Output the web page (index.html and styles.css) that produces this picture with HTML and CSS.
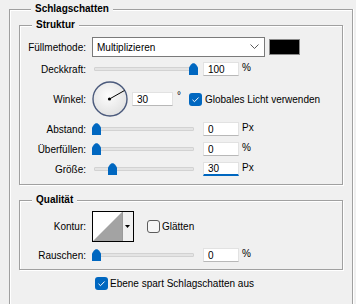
FILE: index.html
```html
<!DOCTYPE html>
<html lang="de">
<head>
<meta charset="UTF-8" />
<title>Schlagschatten</title>
<link rel="stylesheet" href="styles.css">
</head>
<body>
<div class="panel">
  <div class="group-title">Schlagschatten</div>

  <div class="group struktur">
    <div class="group-title">Struktur</div>

    <div class="row first">
      <span class="label">Füllmethode:</span>
      <div class="select">
        <span>Multiplizieren</span>
        <svg width="9" height="6" viewBox="0 0 9 6"><path d="M0.5 0.5L4.5 4.5L8.5 0.5" fill="none" stroke="#5a5a5a" stroke-width="1"/></svg>
      </div>
      <span class="swatch"></span>
    </div>

    <div class="row gap">
      <span class="label">Deckkraft:</span>
      <div class="slider"><span class="track"></span><span class="thumb" style="left:97px"></span></div>
      <input class="num" type="text" value="100">
      <span class="unit">%</span>
    </div>

    <div class="row gap dial-row">
      <span class="label">Winkel:</span>
      <svg class="dial" width="36" height="36" viewBox="0 0 36 36">
        <defs>
          <radialGradient id="dialFill" cx="45%" cy="40%" r="60%">
            <stop offset="0" stop-color="#fdfdfd"/>
            <stop offset="1" stop-color="#e2e2e2"/>
          </radialGradient>
        </defs>
        <circle cx="18" cy="18" r="17" fill="url(#dialFill)" stroke="#4b5a7c" stroke-width="1.4"/>
        <line x1="17.5" y1="18" x2="32.5" y2="9.5" stroke="#000" stroke-width="1"/>
        <circle cx="17.5" cy="18" r="1.6" fill="#000"/>
      </svg>
      <input class="num angle" type="text" value="30">
      <span class="degree">°</span>
      <span class="check on"><svg width="13" height="13" viewBox="0 0 13 13"><path d="M3.5 6.8L5.5 8.7L9.6 4.5" fill="none" stroke="#fff" stroke-width="1"/></svg></span>
      <span class="check-label">Globales Licht verwenden</span>
    </div>

    <div class="row gap">
      <span class="label">Abstand:</span>
      <div class="slider"><span class="track"></span><span class="thumb" style="left:0"></span></div>
      <input class="num" type="text" value="0">
      <span class="unit">Px</span>
    </div>

    <div class="row">
      <span class="label">Überfüllen:</span>
      <div class="slider"><span class="track"></span><span class="thumb" style="left:0"></span></div>
      <input class="num" type="text" value="0">
      <span class="unit">%</span>
    </div>

    <div class="row">
      <span class="label">Größe:</span>
      <div class="slider"><span class="track"></span><span class="thumb" style="left:16px"></span></div>
      <input class="num focus" type="text" value="30">
      <span class="unit">Px</span>
    </div>
  </div>

  <div class="group qualitaet">
    <div class="group-title">Qualität</div>

    <div class="row kontur-row">
      <span class="label">Kontur:</span>
      <svg class="kontur" width="42" height="31" viewBox="0 0 42 31">
        <rect x="0.5" y="0.5" width="41" height="30" fill="#f0f0f0" stroke="#000"/>
        <rect x="1" y="1" width="29" height="29" fill="#fff"/>
        <polygon points="1,30 30,1 30,30" fill="#a3a3a3"/>
        <line x1="30.5" y1="1" x2="30.5" y2="30" stroke="#9a9a9a"/>
        <polygon points="33,14 38,14 35.5,17" fill="#000"/>
      </svg>
      <span class="check off"></span>
      <span class="check-label">Glätten</span>
    </div>

    <div class="row rauschen">
      <span class="label">Rauschen:</span>
      <div class="slider"><span class="track"></span><span class="thumb" style="left:0"></span></div>
      <input class="num" type="text" value="0">
      <span class="unit">%</span>
    </div>
  </div>

  <div class="row footer">
    <span class="check on"><svg width="13" height="13" viewBox="0 0 13 13"><path d="M3.5 6.8L5.5 8.7L9.6 4.5" fill="none" stroke="#fff" stroke-width="1"/></svg></span>
    <span class="check-label">Ebene spart Schlagschatten aus</span>
  </div>
</div>
</body>
</html>
```

FILE: styles.css
```css
* {
  box-sizing: border-box;
}
body {
  margin: 0;
  background: #f0f0f0;
  color: #000;
  font-family: "Liberation Sans", Arial, sans-serif;
  font-size: 10px;
  overflow: hidden;
}
/* outer box runs off the bottom edge, so no bottom border */
.panel {
  margin: 9px 0 0 9px;
  width: 344px;
  height: calc(100vh - 9px);
  padding: 0 9px;
  border: 1px solid #a0a0a0;
  border-bottom: none;
  box-shadow: inset 1px 1px 0 #fff, 1px 0 0 #fff;
}
.group-title {
  width: max-content;
  margin: -7px 0 0 12px;
  padding: 0 4px;
  line-height: 12px;
  font-weight: bold;
  background: #f0f0f0;
}
.group {
  border: 1px solid #a0a0a0;
  box-shadow: inset 1px 1px 0 #fff, 1px 1px 0 #fff;
}
.struktur {
  margin-top: 10px;
  padding-bottom: 5px;
}
.qualitaet {
  margin-top: 15px;
  padding-bottom: 4px;
}
.row {
  display: flex;
  align-items: center;
  height: 20px;
}
.row.first {
  margin-top: 6px;
}
.row.gap {
  margin-top: 2px;
}
.dial-row {
  height: 36px;
}
.label {
  width: 66px;
  margin-right: 6px;
  text-align: right;
  white-space: nowrap;
}
.select {
  display: flex;
  align-items: center;
  justify-content: space-between;
  width: 173px;
  height: 20px;
  padding: 0 5px 0 4px;
  background: #fff;
  border: 1px solid #7a7a7a;
}
.select svg {
  display: block;
}
.swatch {
  width: 31px;
  height: 16px;
  margin-left: 4px;
  background: #000;
  border: 1px solid #8a8a8a;
}
.slider {
  position: relative;
  width: 106px;
  height: 14px;
}
.track {
  position: absolute;
  left: 2px;
  right: 4px;
  top: 5px;
  height: 4px;
  background: #e4e4e4;
  border: 1px solid #d2d2d2;
  border-radius: 1px;
}
.thumb {
  position: absolute;
  top: 1px;
  width: 9px;
  height: 12px;
  background: #0067c0;
  clip-path: polygon(0 100%, 0 38%, 20% 14%, 40% 2%, 60% 2%, 80% 14%, 100% 38%, 100% 100%);
}
.num {
  width: 36px;
  height: 14px;
  margin: 0 0 0 5px;
  padding: 0 0 0 4px;
  font: inherit;
  font-size: 10px;
  line-height: 12px;
  color: #000;
  background: #fff;
  border: 1px solid #e2e2e2;
  border-bottom-color: #b8b8b8;
  outline: none;
}
.num.focus {
  border-bottom: 2px solid #0067c0;
}
.unit {
  margin: 0 0 3px 3px;
}
.dial {
  display: block;
}
.num.angle {
  width: 41px;
  margin-left: 4px;
}
.degree {
  width: 12px;
  margin: 0 0 8px 4px;
}
.check {
  display: block;
  width: 13px;
  height: 13px;
  border-radius: 3px;
}
.check svg {
  display: block;
}
.check.on {
  background: #0067c0;
}
.check.off {
  margin-left: 13px;
  background: #f7f7f7;
  border: 1px solid #5c5c5c;
}
.check-label {
  margin-left: 2px;
  white-space: nowrap;
}
.dial-row .check-label {
  margin-left: 3px;
}
.kontur-row {
  height: 31px;
  margin-top: 5px;
}
.kontur {
  display: block;
}
.rauschen {
  margin-top: 3px;
}
.footer {
  margin-top: 3px;
  padding-left: 76px;
}
```
